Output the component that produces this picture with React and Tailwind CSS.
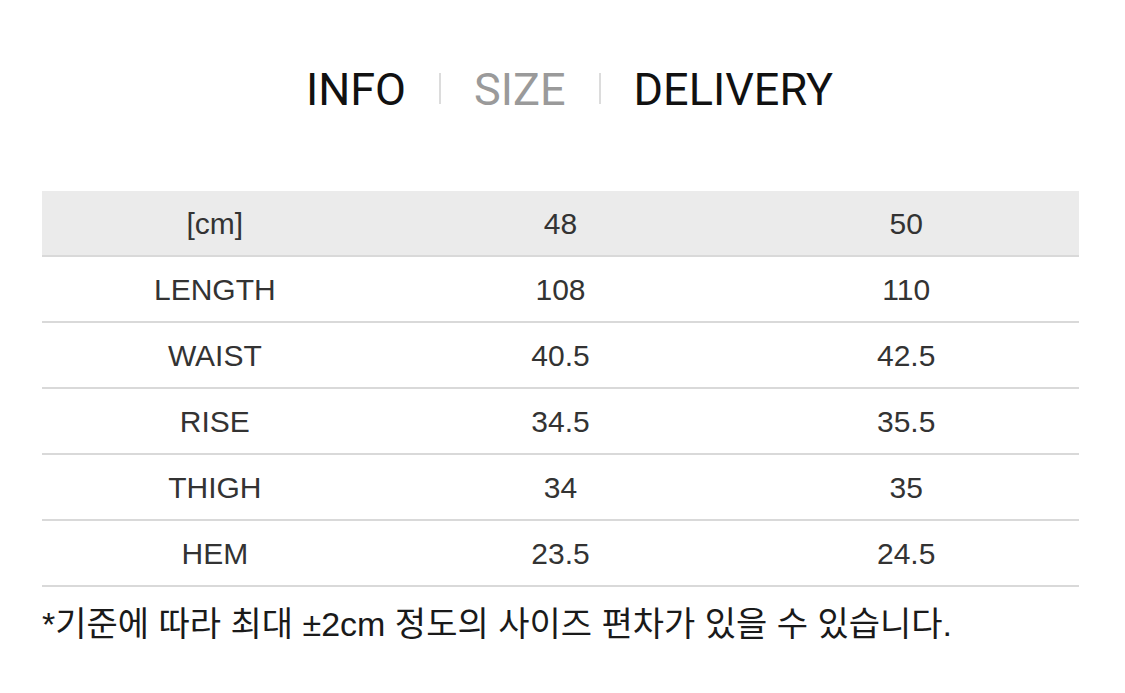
export default function App() {
  const rows = [
    ["LENGTH", "108", "110"],
    ["WAIST", "40.5", "42.5"],
    ["RISE", "34.5", "35.5"],
    ["THIGH", "34", "35"],
    ["HEM", "23.5", "24.5"],
  ];
  return (
    <div className="w-[1125px] h-[693px] bg-white overflow-hidden">
      <div
        className="flex items-start justify-center pt-[67px] pl-[14px] h-[128px] text-[45px] leading-none"
        style={{ fontFamily: 'Roboto, sans-serif' }}
      >
        <span className="text-[#111]">INFO</span>
        <span className="mx-[33px] mt-[6px] w-[2px] h-[31px] bg-[#dcdcdc]" />
        <span className="text-[#9a9a9a]">SIZE</span>
        <span className="mx-[33px] mt-[6px] w-[2px] h-[31px] bg-[#dcdcdc]" />
        <span className="text-[#111]">DELIVERY</span>
      </div>
      <div
        className="mx-[42px] mt-[63px] w-[1037px] text-[30px] text-[#333]"
        style={{ fontFamily: '"Liberation Sans", "Noto Sans CJK KR", sans-serif' }}
      >
        <div className="grid grid-cols-3 h-[64px] items-center bg-[#ebebeb] border-b-2 border-[#d9d9d9] box-content">
          <div className="text-center">[cm]</div>
          <div className="text-center">48</div>
          <div className="text-center">50</div>
        </div>
        {rows.map((r) => (
          <div
            key={r[0]}
            className="grid grid-cols-3 h-[64px] items-center border-b-2 border-[#d9d9d9] box-content"
          >
            {r.map((c, i) => (
              <div key={i} className="text-center">
                {c}
              </div>
            ))}
          </div>
        ))}
        <div className="mt-[20px] text-[34px] text-[#1a1a1a] leading-none whitespace-nowrap">
          *기준에 따라 최대 ±2cm 정도의 사이즈 편차가 있을 수 있습니다.
        </div>
      </div>
    </div>
  );
}
